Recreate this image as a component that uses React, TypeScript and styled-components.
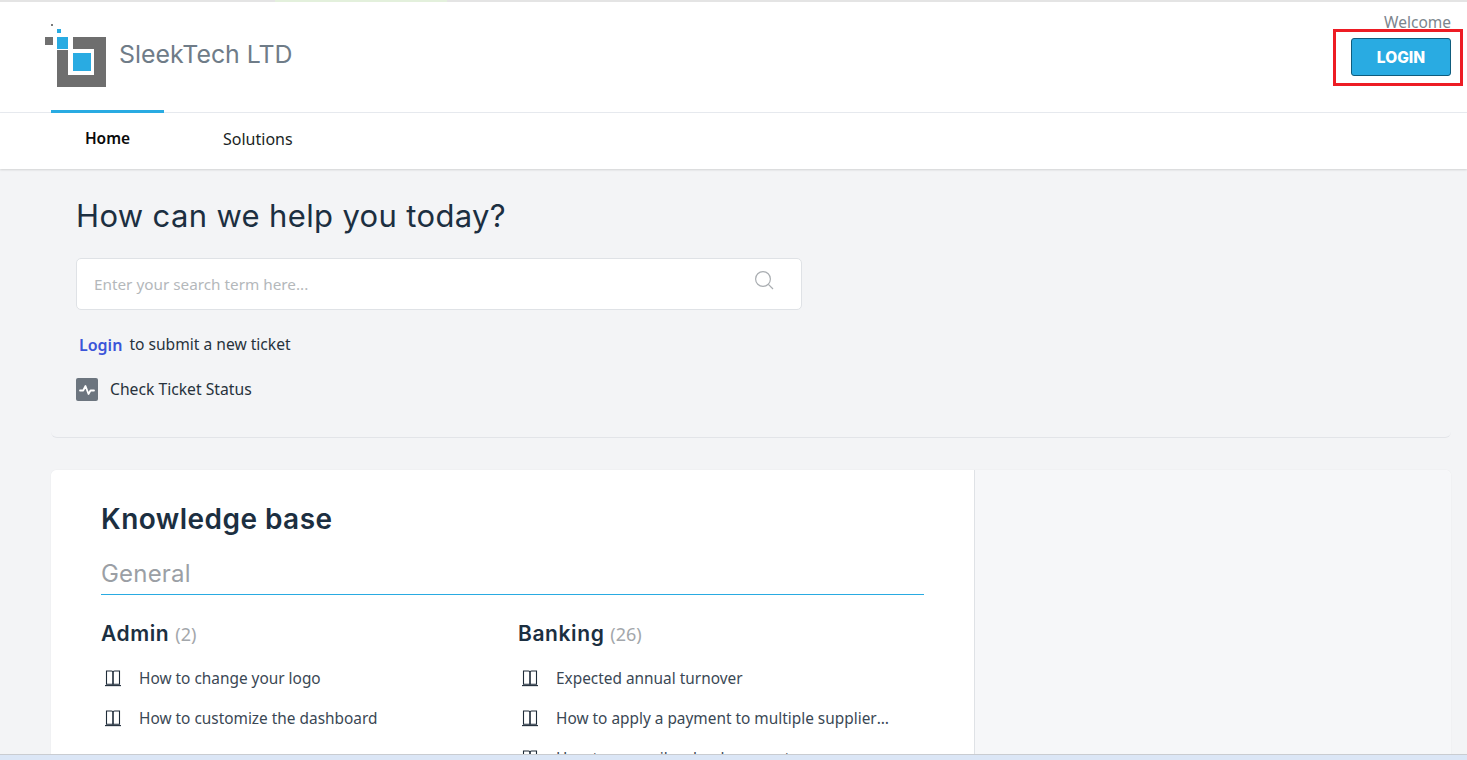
import React from "react";
import styled, { createGlobalStyle } from "styled-components";

const bodyFont = `"Noto Sans", "Open Sans", sans-serif`;
const headFont = `"Inter", "Open Sans", sans-serif`;

const Global = createGlobalStyle`
  html, body { margin: 0; padding: 0; height: 760px; overflow: hidden; background: #f3f4f6; }
  * { box-sizing: border-box; }
  body { font-family: ${bodyFont}; }
`;

const Page = styled.div`
  position: relative;
  width: 1467px;
  height: 760px;
  overflow: hidden;
  background: #f3f4f6;
`;

const TopEdge = styled.div`
  height: 2px;
  background: #e4e4e4;
  padding-left: 275px;
`;
const TopProgress = styled.div`
  width: 172px;
  height: 2px;
  background: #e3f0dc;
`;

const Header = styled.header`
  height: 111px;
  background: #fff;
  border-bottom: 1px solid #e8ebf0;
  display: flex;
  justify-content: space-between;
  padding: 22px 16px 0 45px;
`;
const Brand = styled.div`
  display: flex;
  align-items: flex-start;
  gap: 13px;
`;
const BrandName = styled.span`
  margin-top: 14px;
  font-family: ${headFont};
  font-size: 24.9px;
  line-height: 32px;
  color: #6f7c88;
`;
const Account = styled.div`
  width: 100px;
  display: flex;
  flex-direction: column;
  align-items: flex-end;
`;
const Welcome = styled.span`
  margin-top: -13px;
  font-size: 15.5px;
  line-height: 22px;
  color: #7c858d;
`;
const LoginButton = styled.button`
  width: 100px;
  height: 38px;
  margin-top: 5px;
  background: #29abe2;
  border: 1px solid #0f5c7d;
  border-radius: 3px;
  color: #fff;
  font-family: ${headFont};
  font-weight: 800;
  font-size: 15.5px;
  padding: 0;
`;
const Annotation = styled.div`
  position: absolute;
  left: 1333px;
  top: 29px;
  width: 130px;
  height: 57px;
  border: 3px solid #ed1c24;
  pointer-events: none;
`;

const Nav = styled.nav`
  position: relative;
  height: 56px;
  background: #fff;
  box-shadow: 0 1px 2px rgba(0, 0, 0, 0.14);
  display: flex;
  padding-left: 51px;
`;
const Tab = styled.a<{ $active?: boolean }>`
  position: relative;
  width: ${(p) => (p.$active ? "113px" : "auto")};
  margin-left: ${(p) => (p.$active ? "0" : "59px")};
  padding-top: ${(p) => (p.$active ? "14px" : "15px")};
  text-align: center;
  font-size: ${(p) => (p.$active ? "15.5px" : "16px")};
  line-height: 22px;
  font-weight: ${(p) => (p.$active ? 600 : 400)};
  color: ${(p) => (p.$active ? "#0a0a0a" : "#1a1f24")};
  ${(p) =>
    p.$active &&
    `&::before { content: ""; position: absolute; left: 0; right: 0; top: -3px; height: 3px; background: #29abe2; }`}
`;

const Main = styled.main`
  padding: 0 16px 0 51px;
`;
const Hero = styled.section`
  height: 269px;
  padding: 27px 0 0 25px;
  border-bottom: 1px solid #e2e4e8;
  border-radius: 0 0 6px 6px;
`;
const HeroTitle = styled.h1`
  margin: 0;
  font-family: ${headFont};
  font-weight: 400;
  font-size: 31px;
  letter-spacing: 0.35px;
  line-height: 40px;
  color: #1c2f41;
`;
const SearchBox = styled.div`
  width: 726px;
  height: 52px;
  margin-top: 22px;
  background: #fff;
  border: 1px solid #dfe2e6;
  border-radius: 5px;
  display: flex;
  align-items: center;
  justify-content: space-between;
  padding: 0 26px 0 17px;
  color: #b4b8bb;
  font-size: 15.3px;
`;
const SearchGlyph = styled.svg`
  width: 20px;
  height: 20px;
  margin-bottom: 6px;
`;
const TicketLine = styled.p`
  margin: 23px 0 0;
  font-size: 15.6px;
  line-height: 22px;
  color: #27323c;
  padding-left: 3px;
  display: flex;
  gap: 7px;
`;
const LoginLink = styled.a`
  color: #3b55d9;
  font-weight: 600;
  font-size: 16px;
  position: relative;
  top: 1px;
`;
const StatusRow = styled.div`
  margin-top: 23px;
  display: flex;
  align-items: center;
  gap: 12px;
  font-size: 15.7px;
  line-height: 23px;
  color: #27323c;
`;
const StatusIcon = styled.span`
  width: 22px;
  height: 23px;
  background: #6c757f;
  border-radius: 2px;
  display: flex;
  align-items: center;
  justify-content: center;
`;

const Card = styled.section`
  margin-top: 32px;
  display: grid;
  grid-template-columns: 924px 476px;
  height: 330px;
  border-radius: 6px 6px 0 0;
  overflow: hidden;
  background: #fff;
  box-shadow: 0 0 2px rgba(0, 0, 0, 0.05);
`;
const CardMain = styled.div`
  background: #fff;
  border-right: 1px solid #dfe2e6;
  padding: 30px 50px 0 50px;
`;
const CardAside = styled.aside`
  background: #f6f7f9;
`;
const CardTitle = styled.h2`
  margin: 0;
  font-family: ${headFont};
  font-weight: 600;
  font-size: 28px;
  letter-spacing: 0.45px;
  line-height: 38px;
  color: #1c2f41;
`;
const SectionTitle = styled.h3`
  margin: 18px 0 0;
  height: 39px;
  font-family: ${headFont};
  font-weight: 400;
  font-size: 24px;
  letter-spacing: 0.2px;
  line-height: 36px;
  color: #9b9fa5;
  border-bottom: 1px solid #29abe2;
`;
const Columns = styled.div`
  display: grid;
  grid-template-columns: 417px 1fr;
  margin-top: 23px;
`;
const GroupTitle = styled.h4`
  margin: 0 0 8px;
  font-family: ${headFont};
  font-weight: 600;
  font-size: 21px;
  letter-spacing: 0.6px;
  line-height: 32px;
  color: #1c2f41;
`;
const Count = styled.span`
  font-family: ${bodyFont};
  font-weight: 400;
  font-size: 18px;
  letter-spacing: 0;
  color: #a3a7ab;
`;
const Article = styled.div`
  display: flex;
  align-items: center;
  height: 40px;
  gap: 17px;
  padding-left: 3px;
  font-size: 15.4px;
  color: #3a4754;
`;
const ArticleText = styled.span`
  max-width: 337px;
  white-space: nowrap;
  overflow: hidden;
  text-overflow: ellipsis;
`;
const BottomEdge = styled.div`
  position: absolute;
  left: 0;
  right: 0;
  bottom: 0;
  height: 6px;
  background: #dbe6f6;
  border-top: 1px solid #c9ccd1;
`;

const Logo = () => (
  <svg width="61" height="63" viewBox="0 0 61 63">
    <rect x="6" y="0" width="2" height="2" fill="#7a7a7a" />
    <rect x="12" y="5" width="4" height="4" fill="#29abe2" />
    <rect x="0" y="13" width="8" height="8" fill="#707070" />
    <rect x="12" y="13" width="11" height="12" fill="#29abe2" />
    <path d="M28 13H61V63H12V26H23V51H49V25H28Z" fill="#6e6e6e" />
    <rect x="28" y="29" width="18" height="18" fill="#29abe2" />
  </svg>
);

const SearchIcon = () => (
  <SearchGlyph viewBox="0 0 20 20" fill="none" stroke="#a9adb1" strokeWidth="1.2">
    <circle cx="8" cy="8" r="7.4" />
    <path d="M13.4 13.4L18 18" />
  </SearchGlyph>
);

const PulseIcon = () => (
  <svg width="16" height="12" viewBox="0 0 16 12" fill="none" stroke="#fff" strokeWidth="1.8" strokeLinejoin="round" strokeLinecap="round">
    <path d="M1 6.5h3.2L6.5 2l3 8 2-3.5H15" />
  </svg>
);

const BookIcon = () => (
  <svg width="18" height="17" viewBox="0 0 18 17" fill="none" stroke="#1e2b38" strokeWidth="1.1">
    <path d="M2.5 1H7.5C8.5 1 9 1.6 9 2.4V14.2H2.5V1Z" />
    <path d="M15.5 1H10.5C9.5 1 9 1.6 9 2.4V14.2H15.5V1Z" />
    <path d="M1 15.6H17" />
  </svg>
);

const admin = ["How to change your logo", "How to customize the dashboard"];
const banking = ["Expected annual turnover", "How to apply a payment to multiple suppliers at once", "How to reconcile a bank account"];

const Group = ({ title, count, items }: { title: string; count: number; items: string[] }) => (
  <div>
    <GroupTitle>
      {title} <Count>({count})</Count>
    </GroupTitle>
    {items.map((t) => (
      <Article key={t}>
        <BookIcon />
        <ArticleText>{t}</ArticleText>
      </Article>
    ))}
  </div>
);

export default function App() {
  return (
    <Page>
      <Global />
      <TopEdge>
        <TopProgress />
      </TopEdge>
      <Header>
        <Brand>
          <Logo />
          <BrandName>SleekTech LTD</BrandName>
        </Brand>
        <Account>
          <Welcome>Welcome</Welcome>
          <LoginButton>LOGIN</LoginButton>
        </Account>
      </Header>
      <Annotation />
      <Nav>
        <Tab $active>Home</Tab>
        <Tab>Solutions</Tab>
      </Nav>
      <Main>
        <Hero>
          <HeroTitle>How can we help you today?</HeroTitle>
          <SearchBox>
            <span>Enter your search term here...</span>
            <SearchIcon />
          </SearchBox>
          <TicketLine>
            <LoginLink>Login</LoginLink>
            <span>to submit a new ticket</span>
          </TicketLine>
          <StatusRow>
            <StatusIcon>
              <PulseIcon />
            </StatusIcon>
            <span>Check Ticket Status</span>
          </StatusRow>
        </Hero>
        <Card>
          <CardMain>
            <CardTitle>Knowledge base</CardTitle>
            <SectionTitle>General</SectionTitle>
            <Columns>
              <Group title="Admin" count={2} items={admin} />
              <Group title="Banking" count={26} items={banking} />
            </Columns>
          </CardMain>
          <CardAside />
        </Card>
      </Main>
      <BottomEdge />
    </Page>
  );
}
